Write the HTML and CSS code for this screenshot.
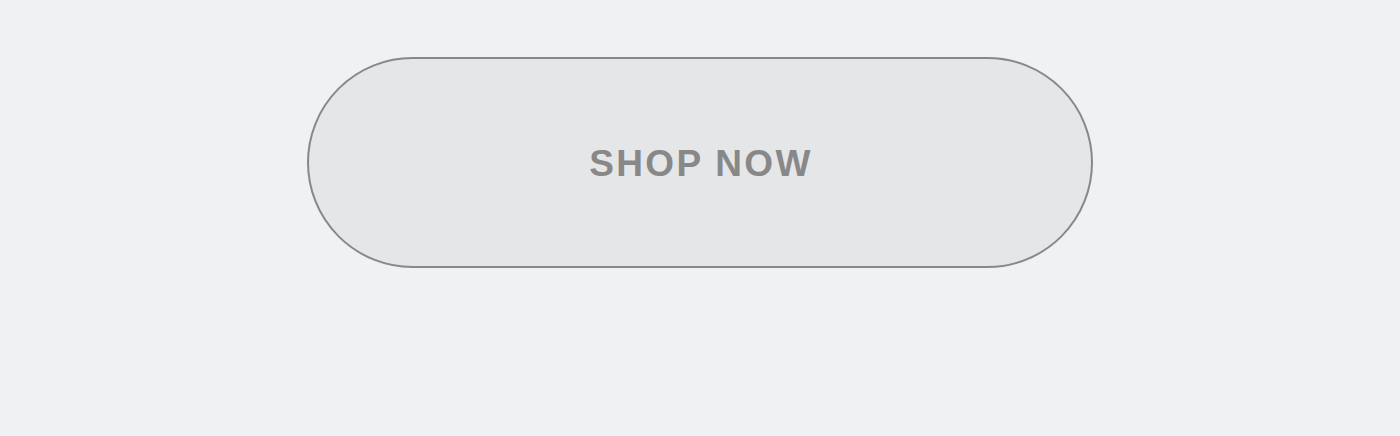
FILE: index.html
```html
<!DOCTYPE html>
<html lang="en">
<head>
<meta charset="utf-8">
<title>Shop</title>
<link rel="stylesheet" href="styles.css">
</head>
<body>
  <main class="stage">
    <a class="pill-button" href="#">SHOP NOW</a>
  </main>
</body>
</html>
```
FILE: styles.css
```css
html, body {
  margin: 0;
  padding: 0;
  background: #f0f1f3;
}

.stage {
  display: flex;
  justify-content: center;
  padding-top: 57px;
  height: 436px;
  box-sizing: border-box;
}

.pill-button {
  display: flex;
  align-items: center;
  justify-content: center;
  width: 786px;
  height: 211px;
  box-sizing: border-box;
  border: 2.5px solid #888888;
  border-radius: 106px;
  background: #e5e6e8;
  color: #888888;
  font-family: "Liberation Sans", Arial, sans-serif;
  font-weight: 700;
  font-size: 37px;
  letter-spacing: 2.3px;
  text-decoration: none;
  padding-left: 2px;
  padding-top: 2px;
}
```
